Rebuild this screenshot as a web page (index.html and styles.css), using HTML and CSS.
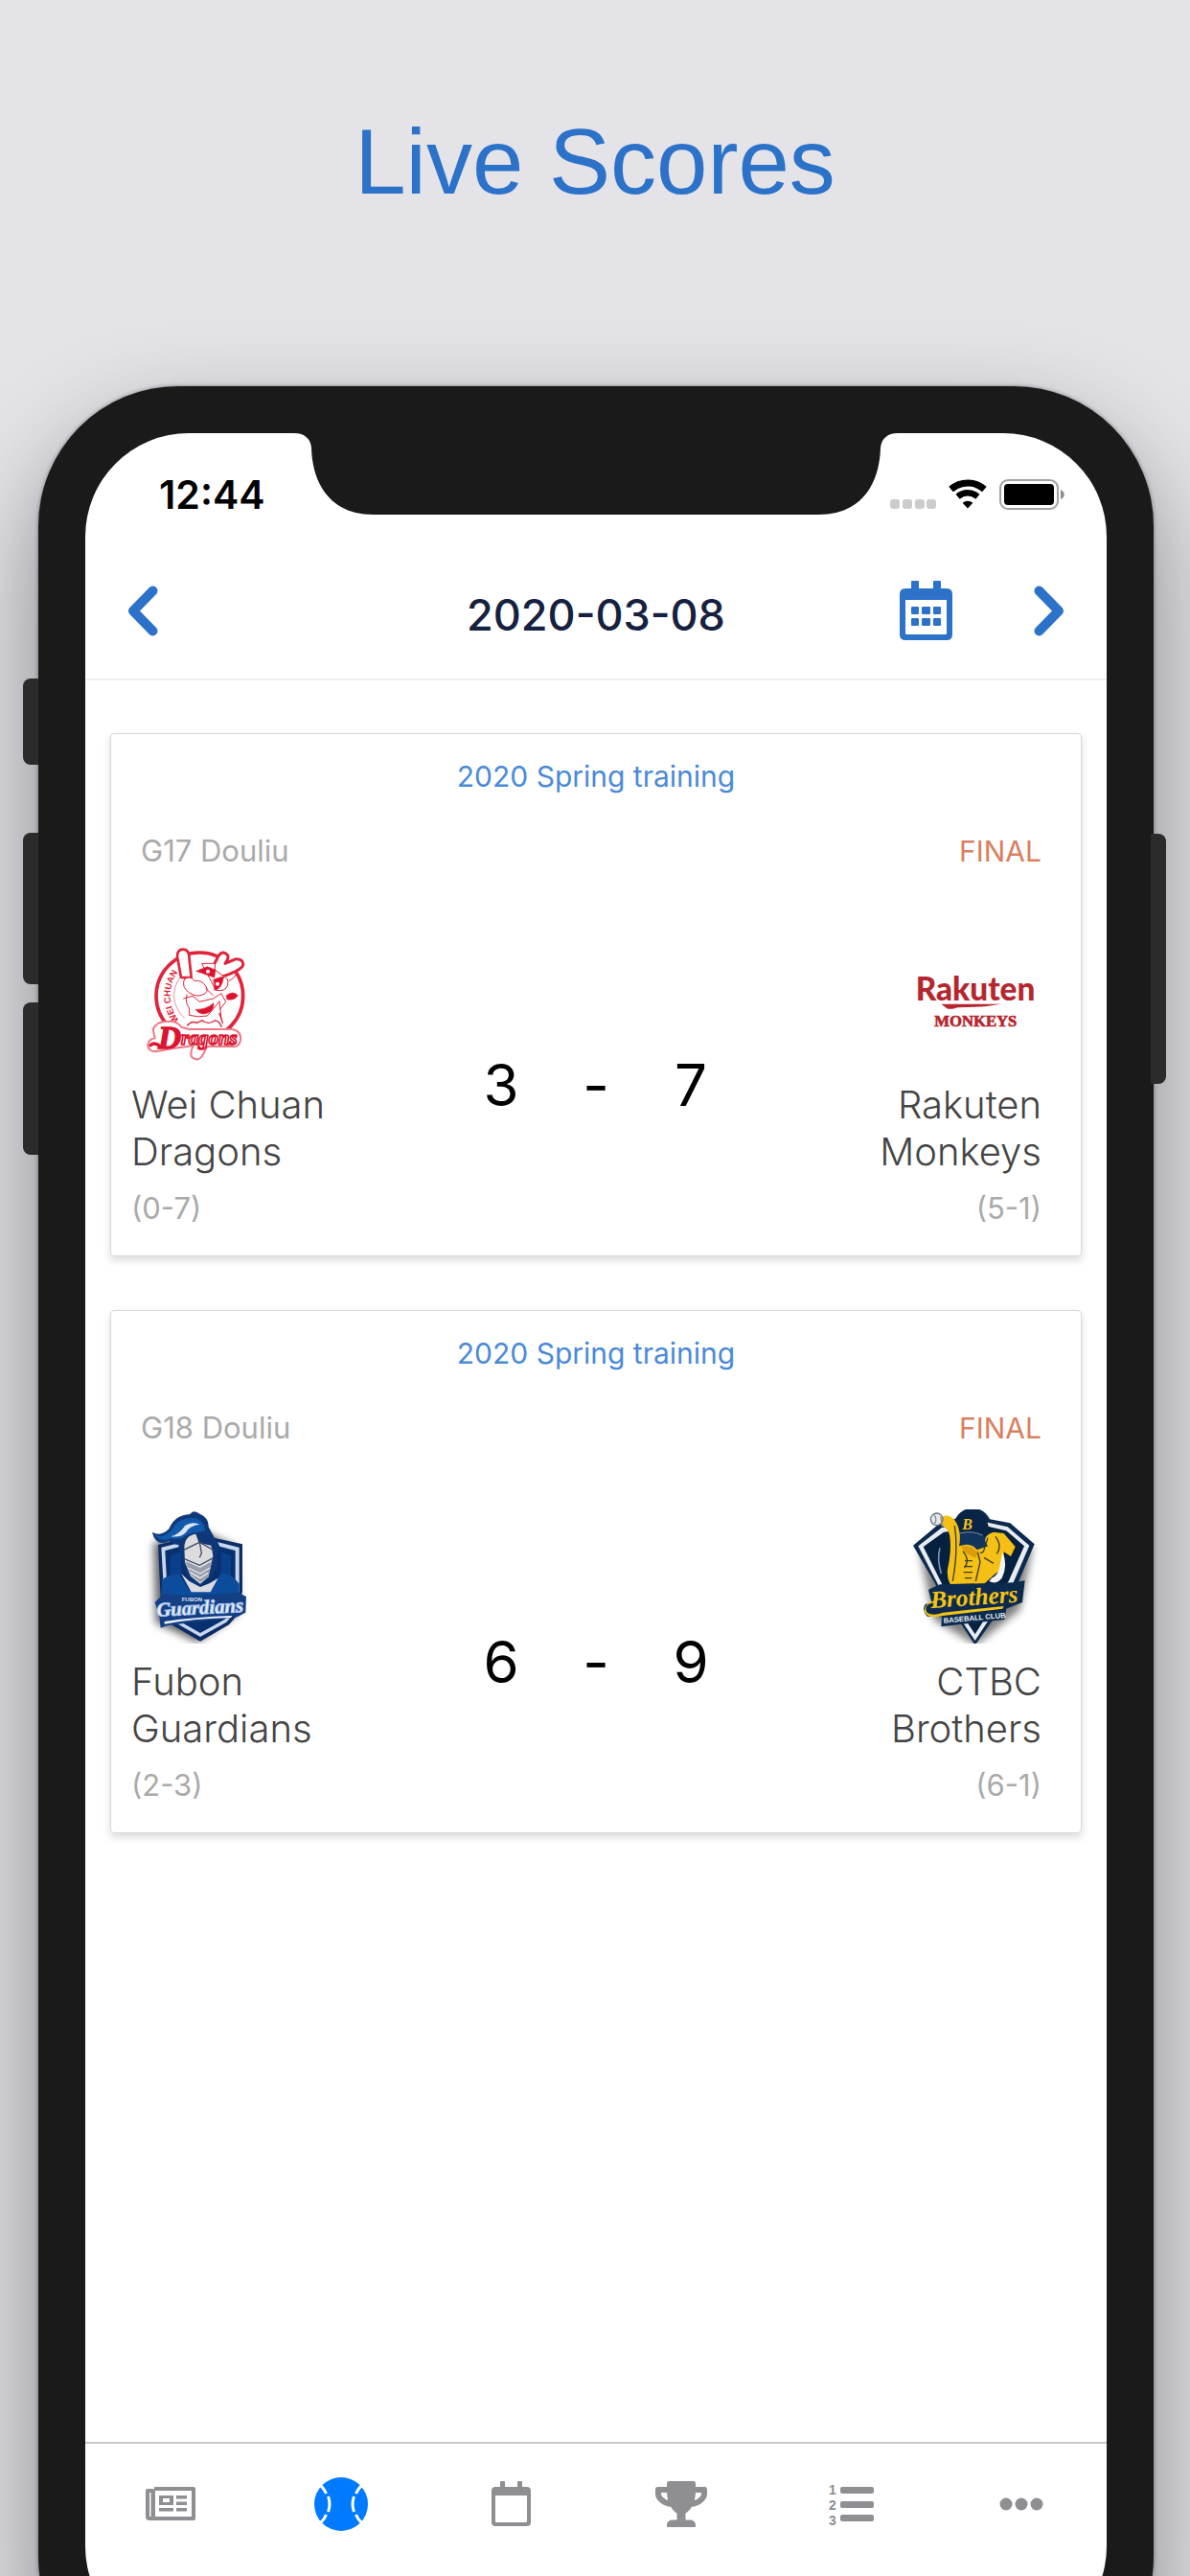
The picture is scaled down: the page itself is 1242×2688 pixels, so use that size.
FILE: index.html
```
<!DOCTYPE html>
<html lang="en">
<head>
    <meta charset="UTF-8">
    <meta name="viewport" content="width=device-width, initial-scale=1.0">
    <title>Live Scores</title>
    <link rel="stylesheet" href="styles.css">
</head>
<body>
    <h1 class="headline">Live Scores</h1>

    <div class="phone">
        <span class="side-btn mute"></span>
        <span class="side-btn vol-up"></span>
        <span class="side-btn vol-down"></span>
        <span class="side-btn power"></span>

        <div class="screen">
            <svg class="notch" viewBox="0 0 630 86">
                <path d="M0 0H630C619 0 613 6 612 15C611 52 593 85 547 85H83C37 85 19 52 18 15C17 6 11 0 0 0Z" fill="#1a1a1a"/>
            </svg>

            <div class="status-bar">
                <span class="time">12:44</span>
                <span class="status-icons">
                    <svg width="48" height="31" viewBox="0 0 48 31" fill="#ccc">
                        <rect x="0" y="21" width="10" height="10" rx="3"/>
                        <rect x="13" y="21" width="10" height="10" rx="3"/>
                        <rect x="26" y="21" width="10" height="10" rx="3"/>
                        <rect x="38" y="21" width="10" height="10" rx="3"/>
                    </svg>
                    <svg width="40" height="31" viewBox="0 0 40 31" fill="none" stroke="#000">
                        <path d="M2.6 10.5A26.5 26.5 0 0 1 37.4 10.5" stroke-width="7"/>
                        <path d="M9.6 18.2A16 16 0 0 1 30.4 18.2" stroke-width="6.5"/>
                        <path d="M20 30.5L14.6 24.8A8 8 0 0 1 25.4 24.8Z" fill="#000" stroke="none"/>
                    </svg>
                    <svg width="69" height="32" viewBox="0 0 69 32">
                        <rect x="1" y="1" width="60" height="30" rx="8" fill="none" stroke="#a3a3a3" stroke-width="2"/>
                        <rect x="5" y="5" width="52" height="22" rx="4"/>
                        <path d="M64 11C69 13 69 19 64 21Z" fill="#8c8c8c"/>
                    </svg>
                </span>
            </div>

            <header class="date-bar">
                <div>
                    <button class="icon-btn" aria-label="Previous day">
                        <svg width="32" height="53" viewBox="0 0 32 53"><path d="M26.500 5.500L6 26.500L26.500 47.500" fill="none" stroke="#2c72c9" stroke-width="10" stroke-linecap="round" stroke-linejoin="round"/></svg>
                    </button>
                </div>
                <h2 class="date">2020-03-08</h2>
                <div class="right-btns">
                    <button class="icon-btn" aria-label="Pick a date">
                        <svg width="55" height="63" viewBox="0 0 55 63" fill="#2c72c9">
                            <path fill-rule="evenodd" d="M12 1Q12 0 13 0H19Q20 0 20 1V8H35V1Q35 0 36 0H42Q43 0 43 1V8H49Q55 8 55 14V56Q55 62 49 62H6Q0 62 0 56V14Q0 8 6 8H12ZM6 20V55Q6 56 7 56H48Q49 56 49 55V20Z"/>
                            <rect x="12" y="27" width="8" height="8" rx="1"/><rect x="23" y="27" width="9" height="8" rx="1"/><rect x="35" y="27" width="8" height="8" rx="1"/>
                            <rect x="12" y="39" width="8" height="8" rx="1"/><rect x="23" y="39" width="9" height="8" rx="1"/><rect x="35" y="39" width="8" height="8" rx="1"/>
                        </svg>
                    </button>
                    <button class="icon-btn" aria-label="Next day">
                        <svg width="32" height="53" viewBox="0 0 32 53"><path d="M5.500 5.500L26 26.500L5.500 47.500" fill="none" stroke="#2c72c9" stroke-width="10" stroke-linecap="round" stroke-linejoin="round"/></svg>
                    </button>
                </div>
            </header>

            <main class="games">
                <article class="game">
                    <h3 class="season">2020 Spring training</h3>
                    <div class="info">
                        <span class="place">G17 Douliu</span>
                        <span class="state">FINAL</span>
                    </div>
                    <div class="match">
                        <div class="team">
                            <svg class="logo" viewBox="24 9 420 420" fill="none" stroke="#e0243a" stroke-width="6" stroke-linejoin="round" stroke-linecap="round">
                                <circle cx="238" cy="208" r="136" fill="#fff" stroke-width="11"/>
                                <path d="M196 132C146 170 146 236 190 276" stroke-width="3" stroke="#f0909a"/>
                                <path id="ring" d="M174 284C136 240 136 170 178 124" stroke="none"/>
                                <text class="ring-text" fill="#e0243a" stroke="none"><textPath href="#ring">WEI CHUAN</textPath></text>
                                <!-- bat and horns -->
                                <path d="M180 150L168 84Q168 62 186 62Q204 62 205 84L212 150Z" fill="#fff" stroke-width="8"/>
                                <path d="M282 112L296 84Q310 62 326 80Q330 92 318 106L352 92Q376 92 374 112Q370 124 330 140L300 150" fill="#fff" stroke-width="9"/>
                                <!-- head -->
                                <path d="M190 156Q206 142 222 160Q246 158 258 178Q268 196 248 204Q226 212 206 198Q180 180 190 156Z" fill="#fff" stroke-width="3"/>
                                <path d="M246 106H286V126L310 144Q330 150 326 174Q318 196 290 190Z" fill="#fff" stroke-width="3"/>
                                <path d="M228 130L262 116L288 126L284 150L256 140ZM282 156L314 146Q308 186 286 190ZM322 206Q342 190 358 206Q346 224 324 218ZM226 250Q256 252 282 230Q284 262 248 264Q232 262 226 250Z" fill="#dc1330" stroke-width="2"/>
                                <path d="M198 204Q192 232 206 246V268Q232 276 262 270L288 240L300 224L306 280M188 216L216 208L238 226L280 216L306 200L320 226L302 250M258 184L280 206M330 160Q348 152 354 138" stroke-width="3"/>
                                <circle cx="264" cy="131" r="6" fill="#fff" stroke="none"/>
                                <circle cx="294" cy="170" r="6" fill="#fff" stroke="none"/>
                                <path d="M300 262L310 292M200 300Q212 284 230 292L246 284Q266 300 286 284Q302 288 306 304" fill="#fff" stroke-width="4"/>
                                <!-- wordmark -->
                                <path d="M92 312Q104 286 136 288Q166 284 182 306L206 312H340Q370 318 366 346Q362 370 340 366H262L246 396Q232 414 214 400Q206 388 218 364L154 372L110 380Q76 386 76 360Q80 342 98 340Z" fill="#fff" stroke="#ef7985"/>
                                <text class="dragon-big" x="108" y="372" fill="#dc1330" stroke="#dc1330" stroke-width="4">D</text>
                                <text class="dragon-small" x="180" y="360" fill="#fff" stroke="#dc1330" stroke-width="5">ragons</text>
                                <path d="M84 362Q98 350 116 366" stroke="#dc1330" stroke-width="10"/>
                            </svg>
                            <h4 class="name">Wei Chuan<br>Dragons</h4>
                            <span class="record">(0-7)</span>
                        </div>
                        <div class="score"><span>3</span><span>-</span><span>7</span></div>
                        <div class="team away">
                            <svg class="logo" viewBox="48 9 420 420" fill="#b5262e">
                                <text class="rakuten" x="261" y="221" text-anchor="middle">Rakuten</text>
                                <path d="M154 233H342L290 241L206 244L190 248H174Z"/>
                                <text class="monkeys" x="262" y="303" text-anchor="middle" stroke="#b5262e" stroke-width="2">MONKEYS</text>
                            </svg>
                            <h4 class="name">Rakuten<br>Monkeys</h4>
                            <span class="record">(5-1)</span>
                        </div>
                    </div>
                </article>

                <article class="game">
                    <h3 class="season">2020 Spring training</h3>
                    <div class="info">
                        <span class="place">G18 Douliu</span>
                        <span class="state">FINAL</span>
                    </div>
                    <div class="match">
                        <div class="team">
                            <svg class="logo" viewBox="24 75 420 420">
                                <defs>
                                    <filter id="soft" x="-30%" y="-20%" width="160%" height="150%"><feGaussianBlur stdDeviation="13"/></filter>
                                </defs>
                                <path d="M94 180L240 140L350 190L360 400L232 492L100 430Z" fill="#000" opacity=".6" filter="url(#soft)"/>
                                <path d="M108 186L190 164L240 146L290 166L372 184V330L362 400L330 436L240 488L150 436L118 400Z" fill="#0d2d66"/>
                                <path d="M118 194L190 176L240 158L290 176L362 194V330L350 396L322 428L240 474L160 428L130 396Z" fill="#c9d7ee"/>
                                <path d="M130 204L190 188L240 172L290 188L350 204V330L340 392L316 420L240 462L166 420L140 392Z" fill="#07306f"/>
                                <path d="M146 220L180 208V280L146 300ZM304 208L336 220V300L304 280Z" fill="#0b3f8b"/>
                                <path d="M120 296Q144 276 176 280L206 330L276 328L304 276Q340 276 362 308V346H118Z" fill="#0c4c9c"/>
                                <path d="M180 276L212 334H272L296 290L270 306L240 318L206 300Z" fill="#d9dbe0"/>
                                <!-- plume -->
                                <path d="M90 146Q116 162 142 136Q160 92 208 90Q218 74 236 88Q268 102 266 130L290 174L190 186Q160 190 144 174Q116 186 104 174Q92 162 90 146Z" fill="#10397b"/>
                                <path d="M96 154Q126 168 152 138Q170 102 214 102Q252 104 256 142L216 152Q180 172 150 166Q116 180 96 154Z" fill="#1159ab"/>
                                <path d="M148 160Q176 152 192 126Q212 112 238 122Q206 126 196 146Q180 164 148 160Z" fill="#d8e4f5"/>
                                <!-- helmet -->
                                <path d="M172 190Q180 150 234 146Q288 150 300 190L292 262L270 290L240 316L206 294L188 250Z" fill="#0d3777"/>
                                <path d="M190 194Q192 156 226 152L236 180L274 188L280 220L266 286L240 308L210 284L192 240Z" fill="#dcdcdf"/>
                                <path d="M188 202L238 178L284 204M238 178L244 212L238 226M190 230L238 250L282 226" fill="none" stroke="#444e66" stroke-width="4"/>
                                <path d="M194 238L240 258L276 238L266 284L240 304L210 280Z" fill="#999da9"/>
                                <path d="M202 258L240 276L270 258M208 272L240 290L264 274" fill="none" stroke="#e7e7ea" stroke-width="4"/>
                                <!-- wordmark -->
                                <path d="M98 366L126 338L200 346L360 336L384 348L382 398L356 412L140 438L116 446L112 410Z" fill="#143f84"/>
                                <text class="fubon" x="182" y="362" fill="#dce6f7">FUBON</text>
                                <text class="guardians" x="104" y="410" fill="#edf4ff" stroke="#a9c5ee" stroke-width="3" transform="rotate(-3 104 410)">Guardians</text>
                                <path d="M128 426Q220 412 340 408L336 414Q220 416 128 434Z" fill="#edf4ff"/>
                            </svg>
                            <h4 class="name">Fubon<br>Guardians</h4>
                            <span class="record">(2-3)</span>
                        </div>
                        <div class="score"><span>6</span><span>-</span><span>9</span></div>
                        <div class="team away">
                            <svg class="logo" viewBox="48 75 420 420">
                                <path d="M86 200L250 100L440 196L400 390L262 500L130 420Z" fill="#000" opacity=".5" filter="url(#soft)"/>
                                <path d="M66 188L150 118L200 104Q220 70 256 70Q292 76 306 106L370 118L446 184L390 316L260 500L148 330Z" fill="#0c2a4d"/>
                                <path d="M82 190L156 132L300 116L362 130L430 188L380 304L260 486L150 322Z" fill="#e9edf2"/>
                                <path d="M98 192L162 146L300 128L358 142L414 190L366 298L260 466L160 316Z" fill="#06213f"/>
                                <!-- cap -->
                                <path d="M190 130Q202 72 256 74Q304 84 304 156L278 152L196 164Z" fill="#0a2447"/>
                                <path d="M206 148L278 152L312 172L270 206L210 190Z" fill="#12345c"/>
                                <path d="M212 150Q250 140 284 156" fill="none" stroke="#7890ab" stroke-width="3"/>
                                <text class="cap-letter" x="220" y="138" fill="#f4c414">B</text>
                                <!-- trunk, face and arm -->
                                <path d="M156 98Q184 86 202 118Q218 150 210 190Q248 176 266 202L300 190Q276 160 318 146L350 150L386 192L372 222L350 208Q348 268 324 276L280 316L200 322Q170 310 174 262Q188 200 180 154Q172 130 154 126Z" fill="#f4c015"/>
                                <path d="M196 126Q208 200 190 300M222 206Q246 236 226 258M228 236H252M226 254H252M224 272H252M228 290H250M268 208L276 240L262 300M300 164L286 208L276 212M324 160Q346 190 328 214M288 226L318 244" fill="none" stroke="#3c3c2a" stroke-width="4"/>
                                <path d="M216 192Q250 180 268 212L264 226Q232 220 216 192Z" fill="#dc9d0c"/>
                                <path d="M346 208Q364 250 344 290Q326 312 304 300L312 290Q334 282 338 250Z" fill="#f5f6f8"/>
                                <path d="M150 196Q140 230 154 276" fill="none" stroke="#7890ab" stroke-width="5"/>
                                <circle cx="140" cy="106" r="19" fill="#e8e9ec" stroke="#6a7585" stroke-width="4"/>
                                <path d="M132 92Q142 106 134 120M152 98L158 128" fill="none" stroke="#8b8d92" stroke-width="4"/>
                                <!-- wordmark -->
                                <path d="M114 326L150 310L380 304L416 298L408 366L358 386L352 420L154 442L156 412L110 410Q92 390 104 372L124 366Z" fill="#0c2a4d"/>
                                <text class="brothers" x="122" y="384" fill="#f4c414" transform="rotate(-4 122 384)">Brothers</text>
                                <path d="M140 366Q94 370 110 398Q126 410 160 398L350 378L346 386L160 408Q112 420 102 396Q100 364 140 360Z" fill="#f4c414"/>
                                <text class="club" x="162" y="431" fill="#e9edf2" transform="rotate(-5 162 431)">BASEBALL CLUB</text>
                            </svg>
                            <h4 class="name">CTBC<br>Brothers</h4>
                            <span class="record">(6-1)</span>
                        </div>
                    </div>
                </article>
            </main>

            <nav class="tab-bar">
                <a href="#news" class="tab" aria-label="News">
                    <svg width="52" height="35" viewBox="0 0 52 35">
                        <path d="M9 2H50V33H4Q2 33 2 31V4H7.500V31M8 3V31" fill="none" stroke="currentColor" stroke-width="4" stroke-linejoin="round"/>
                        <path fill-rule="evenodd" d="M14 9H29V19H14ZM18 12V16H25V12ZM32 9H43V12.500H32ZM32 15.500H43V19H32ZM32 22H43V25.500H32ZM14 22H29V25.500H14Z"/>
                    </svg>
                </a>
                <a href="#scores" class="tab active" aria-label="Scores">
                    <svg width="56" height="56" viewBox="0 0 56 56">
                        <circle cx="28" cy="28" r="28"/>
                        <path d="M6.500 8.500Q10.500 12 12.500 17M14.500 20Q17.500 28 14.500 36M12.500 39Q10.500 44 6.500 47.500M49.500 8.500Q45.500 12 43.500 17M41.500 20Q38.500 28 41.500 36M43.500 39Q45.500 44 49.500 47.500" fill="none" stroke="#fff" stroke-width="3"/>
                    </svg>
                </a>
                <a href="#schedule" class="tab" aria-label="Schedule">
                    <svg width="41" height="48" viewBox="0 0 41 48">
                        <path fill-rule="evenodd" d="M9 1Q9 0 10 0H13Q14 0 14 1V6H27V1Q27 0 28 0H31Q32 0 32 1V6H37Q41 6 41 10V43Q41 47 37 47H4Q0 47 0 43V10Q0 6 4 6H9ZM4 15V42Q4 43 5 43H36Q37 43 37 42V15Z"/>
                    </svg>
                </a>
                <a href="#standings" class="tab" aria-label="Standings">
                    <svg width="54" height="48" viewBox="0 0 576 512">
                        <path d="M552 64H448V24c0-13.300-10.700-24-24-24H152c-13.300 0-24 10.700-24 24v40H24C10.700 64 0 74.700 0 88v56c0 35.700 22.500 72.400 61.900 100.700 31.500 22.700 69.800 37.100 110 41.700C203.300 338.500 240 360 240 360v72h-48c-35.300 0-64 20.700-64 56v12c0 6.600 5.400 12 12 12h296c6.600 0 12-5.400 12-12v-12c0-35.300-28.700-56-64-56h-48v-72s36.700-21.500 68.100-73.600c40.300-4.600 78.600-19 110-41.700 39.300-28.300 61.900-65 61.900-100.700V88c0-13.300-10.700-24-24-24zM99.300 192.800C74.900 175.200 64 155.600 64 144v-16h64.200c1 32.600 5.800 61.200 12.800 86.200-15.100-5.200-29.200-12.400-41.700-21.400zM512 144c0 16.100-17.700 36.100-35.300 48.800-12.500 9-26.700 16.200-41.800 21.400 7-25 11.800-53.600 12.800-86.200H512v16z"/>
                    </svg>
                </a>
                <a href="#ranking" class="tab" aria-label="Ranking">
                    <svg width="47" height="52" viewBox="0 0 47 52">
                        <text class="list-num" x="0" y="16">1</text>
                        <text class="list-num" x="0" y="32">2</text>
                        <text class="list-num" x="0" y="48">3</text>
                        <rect x="12" y="8" width="35" height="7" rx="2"/>
                        <rect x="12" y="23" width="35" height="7" rx="2"/>
                        <rect x="12" y="37" width="35" height="7" rx="2"/>
                    </svg>
                </a>
                <a href="#more" class="tab" aria-label="More">
                    <svg width="46" height="14" viewBox="0 0 46 14">
                        <circle cx="7" cy="7" r="6.500"/><circle cx="23" cy="7" r="6.500"/><circle cx="39" cy="7" r="6.500"/>
                    </svg>
                </a>
            </nav>
        </div>
    </div>
</body>
</html>
```
FILE: styles.css
```
* {
    box-sizing: border-box;
}
body {
    margin: 0;
    height: 100vh;
    overflow: hidden;
    background-color: #e4e3e8;
    font-family: Inter, "Liberation Sans", sans-serif;
}
h1, h2, h3, h4 {
    margin: 0;
    font-weight: 400;
}
svg {
    display: block;
}
.headline {
    padding: 113px 0 178px;
    color: #2c72c9;
    font-family: "Liberation Sans", Arial, sans-serif;
    font-size: 96px;
    line-height: 112px;
    text-align: center;
}

/* phone body, runs off the bottom of the window */
.phone {
    position: relative;
    height: calc(100vh - 277px);
    margin: 0 38px 0 40px;
    padding: 49px;
    border-radius: 146px;
    background-color: #1a1a1a;
    box-shadow: 0 0 4px rgba(0, 0, 0, 0.4), 0 50px 110px rgba(0, 0, 0, 0.42);
}
.side-btn {
    position: absolute;
    left: -16px;
    width: 16px;
    border-radius: 8px 0 0 8px;
    background-color: #2b2b2b;
}
.mute { top: 305px; height: 90px; }
.vol-up { top: 466px; height: 158px; }
.vol-down { top: 643px; height: 159px; }
.power {
    top: 467px;
    left: auto;
    right: -13px;
    height: 261px;
    border-radius: 0 8px 8px 0;
}
.screen {
    position: relative;
    display: flex;
    flex-direction: column;
    height: 100%;
    border-radius: 108px;
    background-color: #fff;
    overflow: hidden;
}
.notch {
    position: absolute;
    top: 0;
    left: 50%;
    width: 630px;
    margin-left: -315px;
}

.status-bar {
    display: flex;
    justify-content: space-between;
    align-items: center;
    height: 122px;
    padding: 6px 43px 0 77px;
}
.time {
    font-size: 41px;
    font-weight: 600;
}
.status-icons {
    display: flex;
    gap: 13px;
}

.date-bar {
    display: grid;
    grid-template-columns: 1fr auto 1fr;
    align-items: center;
    height: 136px;
    padding: 0 44px;
    border-bottom: 2px solid #f0f0f0;
}
.date {
    color: #16213f;
    font-size: 45px;
    font-weight: 500;
}
.right-btns {
    display: flex;
    justify-content: flex-end;
    align-items: center;
    gap: 85px;
}
.icon-btn {
    padding: 0 0 8px;
    border: none;
    background: none;
    cursor: pointer;
}

.games {
    flex: 1;
    display: flex;
    flex-direction: column;
    gap: 56px;
    padding: 55px 26px;
}
.game {
    padding: 26px 0 31px;
    border: 1px solid #d8d8d8;
    border-radius: 4px;
    box-shadow: 0 4px 8px rgba(0, 0, 0, 0.15);
}
.season {
    color: #4a8ad8;
    font-size: 30px;
    line-height: 36px;
    text-align: center;
}
.info {
    display: flex;
    justify-content: space-between;
    padding: 42px 41px 67px 31px;
    font-size: 30px;
    line-height: 36px;
}
.place, .record {
    color: #aaa;
    font-size: 31px;
    line-height: 36px;
}
.state {
    color: #d9805f;
}
.match {
    display: grid;
    grid-template-columns: 1fr auto 1fr;
    align-items: center;
}
.team {
    display: flex;
    flex-direction: column;
    align-items: flex-start;
    padding-left: 21px;
}
.away {
    align-items: flex-end;
    padding: 0 41px 0 0;
    text-align: right;
}
.logo {
    width: 140px;
    height: 140px;
}
.name {
    padding: 15px 0 17px;
    color: #444;
    font-size: 40px;
    font-weight: 300;
    line-height: 49px;
}
.score {
    display: flex;
    padding-top: 12px;
    font-size: 60px;
}
.score span {
    width: 99px;
    text-align: center;
}

.tab-bar {
    display: flex;
    height: 217px;
    padding-bottom: 90px;
    border-top: 2px solid #c8c8c8;
}
.tab {
    flex: 1;
    display: flex;
    justify-content: center;
    align-items: center;
    color: #8e8e93;
}
.tab svg {
    fill: currentColor;
}
.active {
    color: #007aff;
}

/* lettering inside the logos */
.ring-text { font: bold 28px "Liberation Sans", sans-serif; }
.dragon-big { font: italic bold 100px "Liberation Serif", serif; }
.dragon-small { font: italic bold 62px "Liberation Serif", serif; }
.rakuten { font: 900 100px Lato, sans-serif; }
.monkeys { font: bold 50px "Liberation Serif", serif; }
.fubon { font: bold 18px "Liberation Sans", sans-serif; }
.guardians { font: italic bold 62px "Liberation Serif", serif; }
.cap-letter { font: italic bold 48px "Liberation Serif", serif; }
.brothers { font: italic bold 76px "Liberation Serif", serif; }
.club { font: bold 23px "Liberation Sans", sans-serif; }
.list-num { font: bold 14px "Liberation Sans", sans-serif; }
```
